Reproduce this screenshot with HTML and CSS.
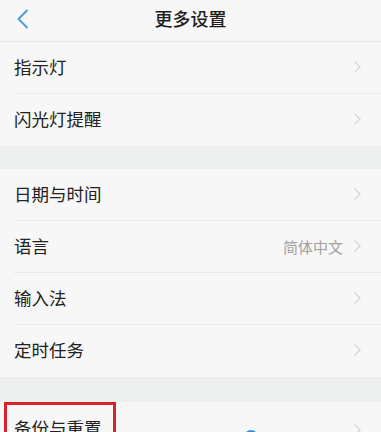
FILE: index.html
```html
<!DOCTYPE html>
<html lang="zh-CN">
<head>
<meta charset="utf-8">
<link rel="stylesheet" href="styles.css">
</head>
<body>
<div class="screen">
  <header class="topbar">
    <svg class="back" width="14" height="20" viewBox="0 0 14 20"><path d="M11 1.5 L2.5 10 L11 18.5" fill="none" stroke="#4c9fd6" stroke-width="2" stroke-linecap="round" stroke-linejoin="round"/></svg>
    <h1 class="title">更多设置</h1>
  </header>
  <ul class="group">
    <li class="row"><span class="label">指示灯</span><span class="chev"></span></li>
    <li class="row last"><span class="label">闪光灯提醒</span><span class="chev"></span></li>
  </ul>
  <div class="gap"></div>
  <ul class="group">
    <li class="row"><span class="label">日期与时间</span><span class="chev"></span></li>
    <li class="row"><span class="label">语言</span><span class="value">简体中文</span><span class="chev"></span></li>
    <li class="row"><span class="label">输入法</span><span class="chev"></span></li>
    <li class="row last"><span class="label">定时任务</span><span class="chev"></span></li>
  </ul>
  <div class="gap gap2"></div>
  <ul class="group final">
    <li class="row last"><span class="label boxed">备份与重置</span><span class="chev"></span><span class="touch"></span></li>
  </ul>
</div>
</body>
</html>
```
FILE: styles.css
```css
* { box-sizing: border-box; }
html, body { margin: 0; padding: 0; }
body {
  background: #f7f7f7;
  font-family: "Noto Sans CJK SC", "Noto Sans", sans-serif;
  color: #222;
  overflow: hidden;
}
.screen { width: 381px; height: 432px; overflow: hidden; }
.topbar {
  height: 42px;
  display: flex;
  align-items: center;
  justify-content: center;
  position: relative;
  border-bottom: 1px solid #e8e8e8;
}
.back { position: absolute; left: 16px; top: 9px; }
.title {
  margin: 0;
  font-size: 18px;
  font-weight: 500;
  line-height: 1;
  color: #1e1e1e;
  margin-top: -6px;
}
.group { list-style: none; margin: 0; padding: 0; }
.row {
  height: 52px;
  display: flex;
  align-items: center;
  padding-left: 14px;
  padding-right: 20px;
  padding-bottom: 2px;
  position: relative;
}
.row::after {
  content: "";
  position: absolute;
  left: 14px; right: 0; bottom: 0;
  border-bottom: 1px solid #e9e9e9;
}
.row.last::after { display: none; }
.label { font-size: 17.5px; line-height: 1; flex: 1; color: #222; }
.value { font-size: 15px; line-height: 1; color: #a0a0a0; margin-right: 8px; }
.chev {
  width: 8px; height: 8px;
  border-top: 1.5px solid #cfcfcf;
  border-right: 1.5px solid #cfcfcf;
  transform: rotate(45deg);
  margin-right: 2px;
}
.gap { height: 23px; background: #edefee; }
.gap2 { height: 25px; }
.final .row { align-items: flex-start; padding-top: 0; padding-bottom: 0; }
.final .row .boxed {
  flex: 0 0 auto;
  margin-left: -10px;
  width: 112px;
  height: 40px;
  border: 3px solid #d8222f;
  border-bottom: none;
  padding-left: 7px;
  padding-top: 14px;
}
.final .row .chev { margin-left: auto; margin-top: 24px; }
.touch {
  position: absolute;
  left: 244px; top: 28px;
  width: 14px; height: 14px;
  border-radius: 50%;
  background: #2a8fe0;
}
```
